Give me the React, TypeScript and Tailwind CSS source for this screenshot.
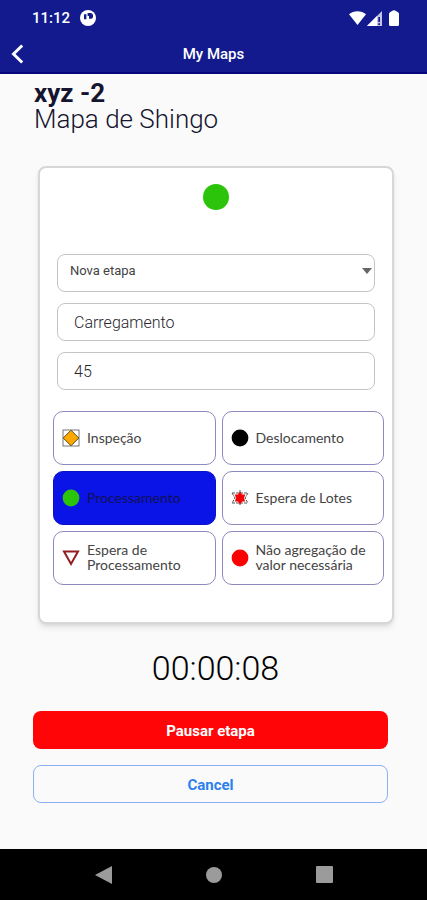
import React, { useState } from 'react'
import clsx from 'clsx'

const InspectionIcon = () => (
  <svg viewBox="0 0 18 18" className="size-[18px] shrink-0">
    <rect x="1" y="1" width="16" height="16" fill="#fff" stroke="#777" />
    <path d="M9 1.2 16.8 9 9 16.8 1.2 9Z" fill="#ffa800" stroke="#5c4a1c" strokeWidth="1" />
  </svg>
)

const DotIcon = ({ color }: { color: string }) => (
  <svg viewBox="0 0 18 18" className="size-[18px] shrink-0">
    <circle cx="9" cy="9" r="8.4" fill={color} />
  </svg>
)

const BatchIcon = () => (
  <svg viewBox="0 0 18 18" className="size-[18px] shrink-0">
    <path d="M9 1V17M1 4H17M1 14H17M1 4 4 9 1 14M17 4 14 9 17 14" fill="none" stroke="#555" strokeWidth="1" strokeDasharray="3 1" />
    <path d="M9 2.5 11 5.5 14.2 5.5 13 9 14.2 12.5H11L9 15.5 7 12.5H3.8L5 9 3.8 5.5H7Z" fill="#f60000" />
  </svg>
)

const WaitIcon = () => (
  <svg viewBox="0 0 18 18" className="size-[18px] shrink-0">
    <path d="M2 2.4H16L9 15Z" fill="#fff" stroke="#931c20" strokeWidth="2" />
  </svg>
)

const stepTypes = [
  { id: 'inspecao', label: 'Inspeção', icon: <InspectionIcon /> },
  { id: 'deslocamento', label: 'Deslocamento', icon: <DotIcon color="#000" /> },
  { id: 'processamento', label: 'Processamento', icon: <DotIcon color="#2bc40a" /> },
  { id: 'lotes', label: 'Espera de Lotes', icon: <BatchIcon /> },
  { id: 'espera', label: 'Espera de Processamento', icon: <WaitIcon /> },
  { id: 'nao-agrega', label: 'Não agregação de valor necessária', icon: <DotIcon color="#ff0000" /> },
]

function StatusBar() {
  return (
    <div className="flex h-9 items-center justify-between pl-8 pr-7 text-white">
      <div className="flex items-center gap-2.5">
        <span className="text-[15px] font-medium">11:12</span>
        <svg viewBox="0 0 16 16" className="size-4">
          <circle cx="8" cy="8" r="8" fill="#fff" />
          <path d="M4 4.2H6.4V9.2H4ZM7.6 3H10.2A2.7 2.7 0 0 1 10.2 8.8H9V6H7.6Z" fill="#121a8e" />
        </svg>
      </div>
      <div className="flex items-center gap-px">
        <svg viewBox="0 0 17 14" className="h-[14px] w-[17px]">
          <path d="M8.5 14 0 3.2C4.6-.8 12.4-.8 17 3.2Z" fill="#fff" />
        </svg>
        <svg viewBox="0 0 15 15" className="size-[15px]">
          <path d="M15 0V15H0Z" fill="#fff" fillOpacity=".75" />
          <path d="M10 5V15H0Z" fill="#fff" />
          <path d="M11.3 6H13V11H11.3ZM11.3 12.2H13V14H11.3Z" fill="#121a8e" />
        </svg>
        <svg viewBox="0 0 10 16" className="ml-1.5 h-4 w-[10px]">
          <path d="M3 1Q5-.5 7 1L9 2.2Q10 3 10 4V14.5Q10 16 8.5 16H1.5Q0 16 0 14.5V4Q0 3 1 2.2Z" fill="#fff" />
        </svg>
      </div>
    </div>
  )
}

function App(): React.JSX.Element {
  const [selected, setSelected] = useState('processamento')
  const [name, setName] = useState('Carregamento')
  const [minutes, setMinutes] = useState('45')

  const field = 'h-[38px] w-full rounded-lg border border-[#c4c4c6] bg-white'

  return (
    <div className="flex min-h-screen flex-col bg-[#fafafa] font-['Roboto',sans-serif] text-[#15152f]">
      {/* Header */}
      <header className="border-b-2 border-[#05077a] bg-[#121a8e]">
        <StatusBar />
        <div className="grid h-9 grid-cols-[1fr_auto_1fr] items-center text-white">
          <button aria-label="Voltar" className="justify-self-start pl-[11px]">
            <svg viewBox="0 0 13 20" className="h-5 w-[13px]">
              <path d="M11.2 1.5 2.5 10 11.2 18.5" fill="none" stroke="#fff" strokeWidth="3" />
            </svg>
          </button>
          <span className="text-[15px] font-medium">My Maps</span>
        </div>
      </header>

      <main className="flex-1 pt-1.5">
        <div className="px-[34px]">
          <h1 className="text-[26px] leading-[26px] font-bold">xyz -2</h1>
          <h2 className="text-[26px] leading-[26px] font-light">Mapa de Shingo</h2>
        </div>

        {/* Step card */}
        <section className="mt-[34px] mr-[33px] ml-[38px] rounded-lg border-2 border-[#d7d7d9] bg-white px-2 pt-4 pb-[37px] shadow-md">
          <svg viewBox="0 0 26 26" className="mx-auto block size-[26px]">
            <circle cx="13" cy="13" r="13" fill="#2bc40a" />
          </svg>

          <div className="mt-11 flex flex-col gap-[11px] px-[9px]">
            <div className="relative">
              <select aria-label="Etapa" className={clsx(field, 'appearance-none px-3 pb-1 text-[13px] text-[#444]')}>
                <option>Nova etapa</option>
              </select>
              <svg viewBox="0 0 10 6" className="pointer-events-none absolute top-[14px] right-[3px] h-1.5 w-2.5">
                <path d="M0 0H10L5 6Z" fill="#666" />
              </svg>
            </div>
            <input
              aria-label="Nome"
              value={name}
              onChange={(e) => setName(e.target.value)}
              className={clsx(field, 'px-4 text-base font-light text-[#26262e]')}
            />
            <input
              aria-label="Tempo"
              value={minutes}
              onChange={(e) => setMinutes(e.target.value)}
              className={clsx(field, 'px-4 text-base font-light text-[#26262e]')}
            />
          </div>

          <div className="mt-[21px] grid grid-cols-2 gap-1.5 pl-[5px]">
            {stepTypes.map((step) => (
              <button
                key={step.id}
                onClick={() => setSelected(step.id)}
                className={clsx(
                  "flex h-[54px] items-center gap-[7px] rounded-[10px] border pr-3 pl-2 text-left font-['Lato',sans-serif] text-sm leading-[15px]",
                  selected === step.id
                    ? 'border-[#0a12c8] bg-[#0b14e6] text-[#111155]'
                    : 'border-[#8d8abf] bg-white text-[#444]'
                )}
              >
                {step.icon}
                <span className="pb-0.5">{step.label}</span>
              </button>
            ))}
          </div>
        </section>

        {/* Timer and actions */}
        <div className="mt-6 pl-1 text-center text-[34px] leading-10 font-light text-[#000]">00:00:08</div>
        <div className="mt-[23px] mr-[39px] ml-[33px] flex flex-col gap-4">
          <button className="h-[38px] rounded-lg bg-[#ff0508] pt-0.5 text-[15px] font-bold text-white">Pausar etapa</button>
          <button className="h-[38px] rounded-lg border border-[#8db1f3] pt-0.5 text-[15px] font-bold text-[#2a80f0]">Cancel</button>
        </div>
      </main>

      {/* System navigation */}
      <nav className="grid h-[51px] grid-cols-[1fr_auto_1fr] items-center gap-[94px] bg-black">
        <button aria-label="Back" className="justify-self-end">
          <svg viewBox="0 0 17 18" className="h-[18px] w-[17px]">
            <path d="M0 9 17 0V18Z" fill="#9b9b9b" />
          </svg>
        </button>
        <button aria-label="Home">
          <svg viewBox="0 0 16 16" className="size-4">
            <circle cx="8" cy="8" r="8" fill="#9b9b9b" />
          </svg>
        </button>
        <button aria-label="Recents" className="justify-self-start">
          <svg viewBox="0 0 17 17" className="size-[17px]">
            <rect width="17" height="17" rx="1" fill="#9b9b9b" />
          </svg>
        </button>
      </nav>
    </div>
  )
}

export default App
